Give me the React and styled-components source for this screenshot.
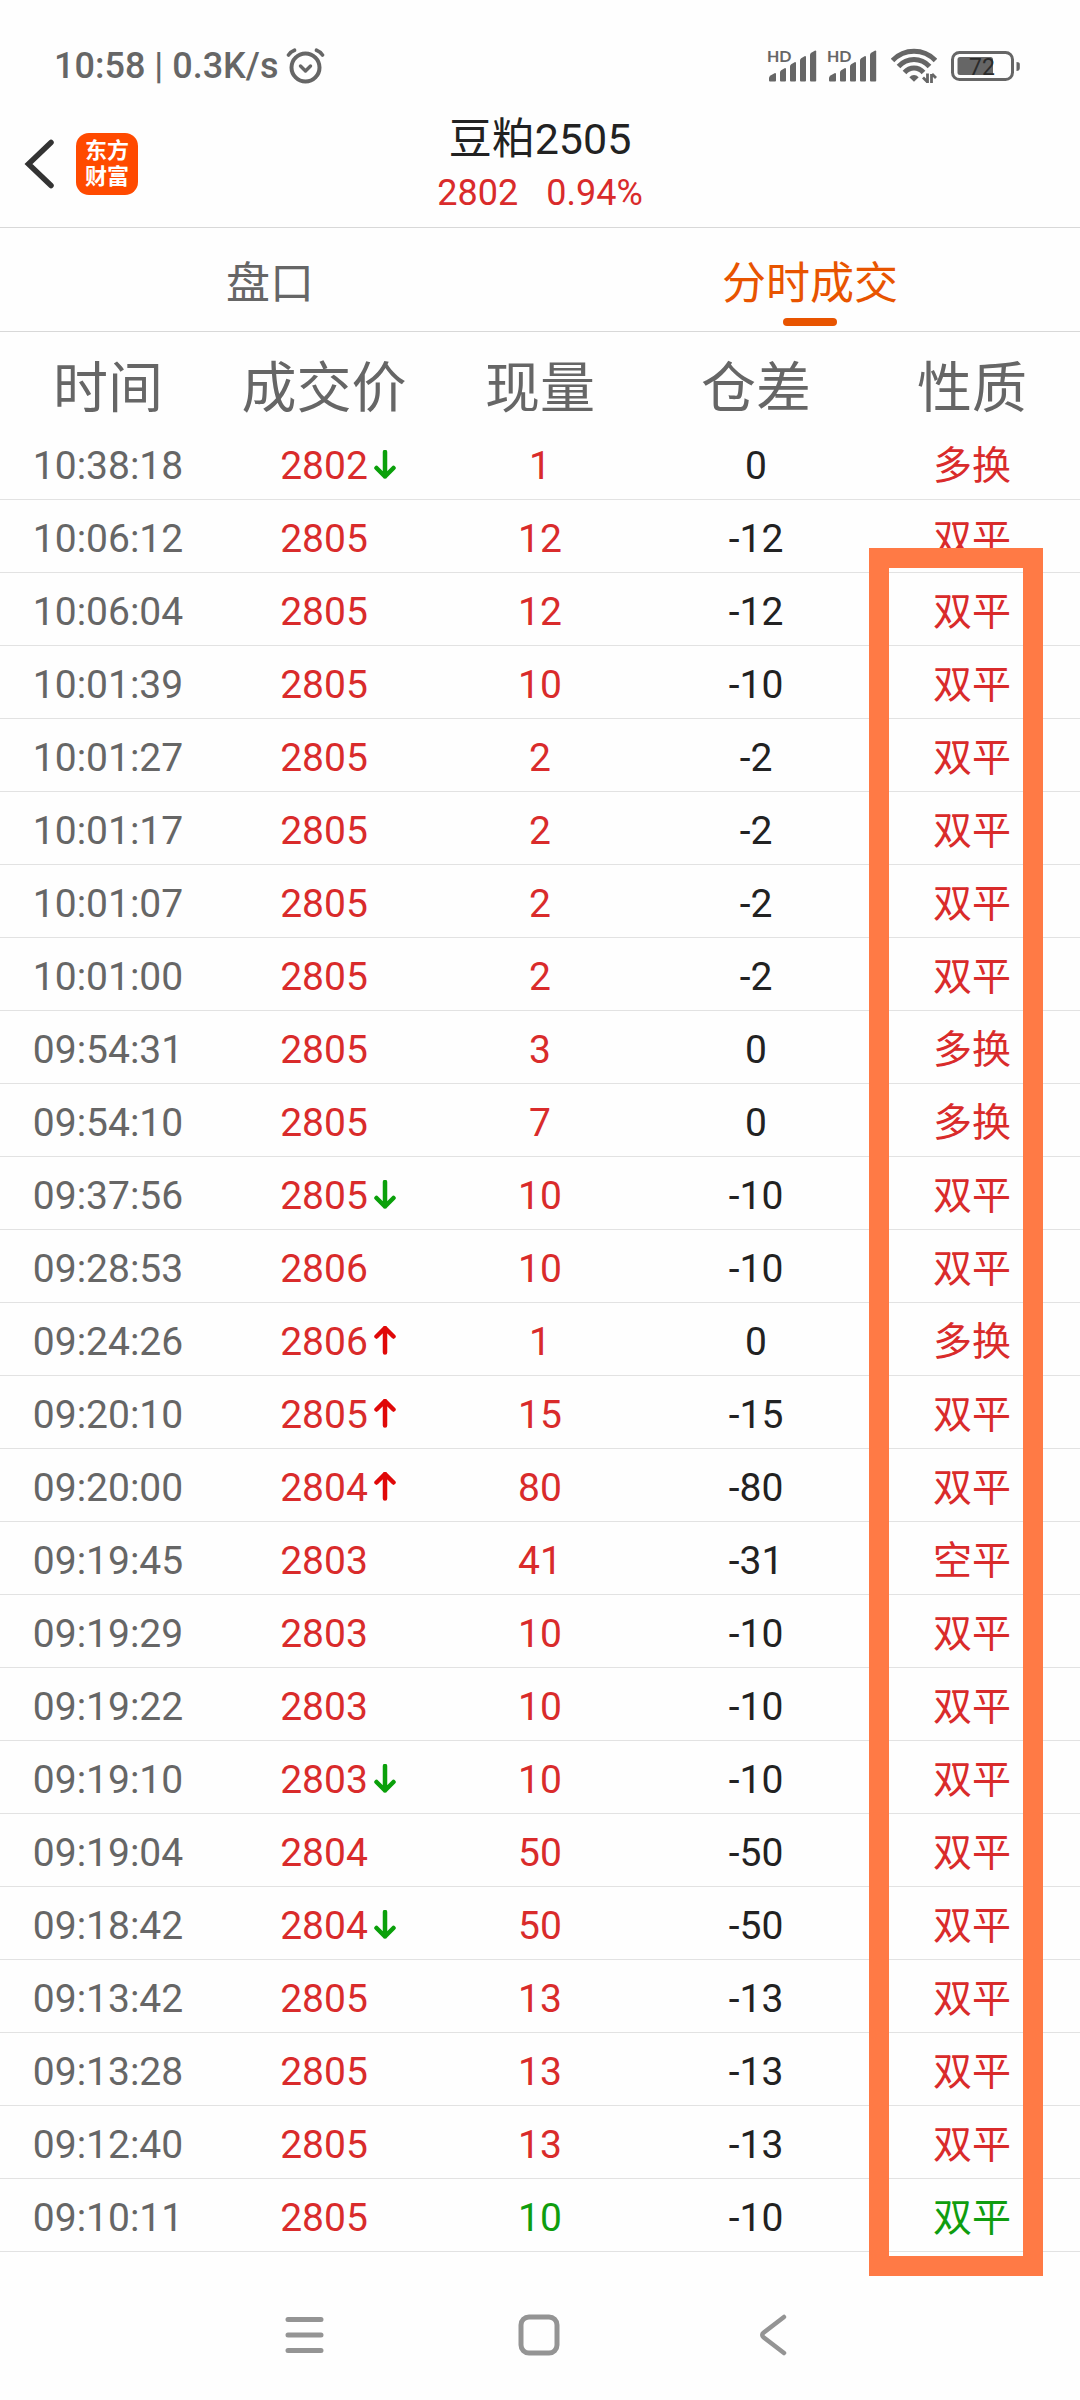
import React from "react";
import styled, { createGlobalStyle } from "styled-components";

const GlobalStyle = createGlobalStyle`
  *, *::before, *::after { box-sizing: border-box; }
  body {
    margin: 0;
    background: #fefefe;
    color: #222222;
    font-family: Roboto, "Noto Sans CJK SC", sans-serif;
  }
  button { border: 0; padding: 0; background: none; font: inherit; color: inherit; cursor: pointer; }
`;

const colors = {
  up: "#d92b2b",
  down: "#0f9d0f",
  muted: "#666666",
  ink: "#222222",
  accent: "#e85400",
  mark: "#ff7a45",
};

const Screen = styled.div`
  display: flex;
  flex-direction: column;
`;

const StatusBar = styled.div`
  display: flex;
  justify-content: space-between;
  align-items: center;
  height: 100px;
  padding: 32px 60px 0 54px;
  color: ${colors.muted};
`;

const StatusGroup = styled.div`
  display: flex;
  align-items: center;
  gap: ${(p) => p.$gap}px;
`;

const StatusText = styled.span`
  font-size: 36px;
  line-height: 44px;
  font-weight: 500;
`;

const Header = styled.header`
  display: grid;
  grid-template-columns: 1fr auto 1fr;
  height: 128px;
  padding: 0 24px;
  border-bottom: 1px solid #d8d8d8;
`;

const HeaderLeft = styled.div`
  display: flex;
  align-items: center;
  gap: 20px;
`;

const BackButton = styled.button`
  display: flex;
`;

const Logo = styled.div`
  display: flex;
  flex-direction: column;
  align-items: center;
  justify-content: center;
  width: 62px;
  height: 62px;
  border-radius: 13px;
  background: #ff4a00;
  color: #ffffff;
  font-size: 22px;
  font-weight: 700;
  line-height: 26px;
`;

const TitleBlock = styled.div`
  display: flex;
  flex-direction: column;
  align-items: center;
  padding-top: 13px;
`;

const Title = styled.h1`
  margin: 0;
  font-size: 43px;
  font-weight: 400;
  line-height: 52px;
`;

const Quote = styled.div`
  display: flex;
  gap: 28px;
  color: ${colors.up};
  font-size: 36px;
  line-height: 56px;
`;

const Tabs = styled.nav`
  display: grid;
  grid-template-columns: 1fr 1fr;
  height: 104px;
  border-bottom: 1px solid #d8d8d8;
`;

const Tab = styled.button`
  display: flex;
  flex-direction: column;
  align-items: center;
  justify-content: flex-end;
  gap: 4px;
  padding-bottom: 5px;
  font-size: 44px;
  line-height: 60px;
  color: ${(p) => (p.$active ? colors.accent : colors.muted)};

  &::after {
    content: "";
    width: 54px;
    height: 8px;
    border-radius: 4px;
    background: ${(p) => (p.$active ? colors.accent : "transparent")};
  }
`;

const Trades = styled.main`
  position: relative;
`;

const Table = styled.table`
  width: 100%;
  table-layout: fixed;
  border-collapse: separate;
  border-spacing: 0;
`;

const HeadCell = styled.th`
  height: 95px;
  padding: 16px 0 0;
  font-size: 55px;
  font-weight: 400;
  line-height: 72px;
  color: ${colors.muted};
`;

const Cell = styled.td`
  height: 73px;
  padding: 5px 0 0;
  border-bottom: 1px solid #e2e2e2;
  font-size: 39px;
  line-height: 48px;
  text-align: center;
  color: ${(p) => colors[p.$tone]};
`;

const Price = styled.div`
  display: grid;
  grid-template-columns: 1fr auto 1fr;
  align-items: center;
  gap: 5px;

  & > :first-child { grid-column: 2; }
`;

const Highlight = styled.div`
  position: absolute;
  top: 216px;
  bottom: -24px;
  left: calc(80% + 5px);
  right: 37px;
  border: 20px solid ${colors.mark};
  pointer-events: none;
`;

const NavBar = styled.nav`
  display: grid;
  grid-template-columns: repeat(3, 1fr);
  height: 148px;
  padding: 18px 190px 0 188px;
`;

const NavButton = styled.button`
  display: flex;
  align-items: center;
  justify-content: center;
`;

const AlarmIcon = () => (
  <svg width="40" height="36" viewBox="0 0 40 36" fill="none" stroke="currentColor" strokeWidth="4" strokeLinecap="round" strokeLinejoin="round">
    <circle cx="19.5" cy="19.5" r="14" />
    <path d="M14.5 18l5 5 5-5" strokeWidth="3.4" />
    <path d="M2.500 7Q5 3.500 8.500 2.200M36.500 7Q34 3.500 30.500 2.200" strokeWidth="3.6" />
  </svg>
);

const SignalSvg = styled.svg`
  overflow: visible;
`;

const SignalIcon = () => (
  <SignalSvg width="50" height="34" viewBox="0 0 50 34" fill="currentColor">
    <text x="0" y="13" fontSize="16" fontWeight="700" fontFamily="Lato, sans-serif">HD</text>
    <path d="M2 29q0-1.500 1.500-2.500l4.500-2.500q1 0 1 1v6.500q0 1-1 1H3q-1 0-1-1z" />
    <path d="M13 23.500q0-1.500 1.200-2.200l3.800-2.300q1 0 1 1v11.500q0 1-1 1h-4q-1 0-1-1z" />
    <path d="M23 17.500q0-1.500 1.200-2.200l3.800-2.300q1 0 1 1v17.500q0 1-1 1h-4q-1 0-1-1z" />
    <path d="M33 11.500q0-1.500 1.200-2.200l3.800-2.300q1 0 1 1v23.500q0 1-1 1h-4q-1 0-1-1z" />
    <path d="M43 6q0-1.500 1.200-2.200l4-2.300q1 0 1 1v29q0 1-1 1h-4.200q-1 0-1-1z" />
  </SignalSvg>
);

const WifiIcon = () => (
  <svg width="46" height="36" viewBox="0 0 46 36" fill="none" stroke="currentColor" strokeWidth="5">
    <path d="M1.500 12.500Q10.500 3.300 23 3.300T44.500 12.500" />
    <path d="M7.500 18.500Q14 11.600 23 11.600T38.500 18.500" />
    <path d="M13.500 24.500Q17.500 20 23 20T32.500 24.500" />
    <path d="M18.300 29.200Q20.500 27 23 27t4.700 2.200L23 33.800z" fill="currentColor" stroke="none" />
    <path d="M36.500 25.500v9.500M32 29.500l4 4M40.500 35v-9M45 30l-4-4" strokeWidth="2.800" />
  </svg>
);

const BatteryIcon = () => (
  <svg width="69" height="32" viewBox="0 0 69 32">
    <rect x="1.500" y="2.500" width="60" height="27" rx="7" fill="none" stroke="currentColor" strokeWidth="3" />
    <rect x="6.500" y="7" width="35.500" height="18" rx="2.500" fill="currentColor" />
    <path d="M65.500 12q3.300 0 3.300 2v4q0 3-3.300 3z" fill="currentColor" />
    <text x="18" y="24.500" fontSize="23" fill="#2b2b2b" fontFamily="Roboto, sans-serif">72</text>
  </svg>
);

const ArrowIcon = ({ dir }) => (
  <svg width="24" height="32" viewBox="0 0 24 32" fill="none" stroke={dir === "down" ? "#0aa00a" : "#e00808"} strokeWidth="4.500" strokeLinecap="round" strokeLinejoin="round">
    {dir === "down" ? <path d="M12 2v24.500M3.500 18l8.500 8.500 8.500-8.500" /> : <path d="M12 26.500V2M3.500 10.500L12 2l8.500 8.500" />}
  </svg>
);

const rows = [
  ["10:38:18", "2802", "down", "1", "0", "多换"],
  ["10:06:12", "2805", "", "12", "-12", "双平"],
  ["10:06:04", "2805", "", "12", "-12", "双平"],
  ["10:01:39", "2805", "", "10", "-10", "双平"],
  ["10:01:27", "2805", "", "2", "-2", "双平"],
  ["10:01:17", "2805", "", "2", "-2", "双平"],
  ["10:01:07", "2805", "", "2", "-2", "双平"],
  ["10:01:00", "2805", "", "2", "-2", "双平"],
  ["09:54:31", "2805", "", "3", "0", "多换"],
  ["09:54:10", "2805", "", "7", "0", "多换"],
  ["09:37:56", "2805", "down", "10", "-10", "双平"],
  ["09:28:53", "2806", "", "10", "-10", "双平"],
  ["09:24:26", "2806", "up", "1", "0", "多换"],
  ["09:20:10", "2805", "up", "15", "-15", "双平"],
  ["09:20:00", "2804", "up", "80", "-80", "双平"],
  ["09:19:45", "2803", "", "41", "-31", "空平"],
  ["09:19:29", "2803", "", "10", "-10", "双平"],
  ["09:19:22", "2803", "", "10", "-10", "双平"],
  ["09:19:10", "2803", "down", "10", "-10", "双平"],
  ["09:19:04", "2804", "", "50", "-50", "双平"],
  ["09:18:42", "2804", "down", "50", "-50", "双平"],
  ["09:13:42", "2805", "", "13", "-13", "双平"],
  ["09:13:28", "2805", "", "13", "-13", "双平"],
  ["09:12:40", "2805", "", "13", "-13", "双平"],
  ["09:10:11", "2805", "", "10", "-10", "双平", "down"],
];

export default function App() {
  return (
    <Screen>
      <GlobalStyle />
      <StatusBar>
        <StatusGroup $gap={8}>
          <StatusText>10:58 | 0.3K/s</StatusText>
          <AlarmIcon />
        </StatusGroup>
        <StatusGroup $gap={14}>
          <StatusGroup $gap={10}>
            <SignalIcon />
            <SignalIcon />
          </StatusGroup>
          <WifiIcon />
          <BatteryIcon />
        </StatusGroup>
      </StatusBar>

      <Header>
        <HeaderLeft>
          <BackButton aria-label="返回">
            <svg width="32" height="52" viewBox="0 0 32 52" fill="none" stroke="#333333" strokeWidth="5.500" strokeLinecap="round">
              <path d="M27 4.500L4.500 26 27 47.500" strokeLinejoin="miter" />
            </svg>
          </BackButton>
          <Logo>
            <span>东方</span>
            <span>财富</span>
          </Logo>
        </HeaderLeft>
        <TitleBlock>
          <Title>豆粕2505</Title>
          <Quote>
            <span>2802</span>
            <span>0.94%</span>
          </Quote>
        </TitleBlock>
      </Header>

      <Tabs>
        <Tab>盘口</Tab>
        <Tab $active aria-current="page">分时成交</Tab>
      </Tabs>

      <Trades>
        <Table>
          <thead>
            <tr>
              {["时间", "成交价", "现量", "仓差", "性质"].map((name) => (
                <HeadCell key={name} scope="col">{name}</HeadCell>
              ))}
            </tr>
          </thead>
          <tbody>
            {rows.map(([time, price, dir, volume, change, kind, tone = "up"]) => (
              <tr key={time}>
                <Cell $tone="muted">{time}</Cell>
                <Cell $tone="up">
                  <Price>
                    <span>{price}</span>
                    {dir && <ArrowIcon dir={dir} />}
                  </Price>
                </Cell>
                <Cell $tone={tone}>{volume}</Cell>
                <Cell $tone="ink">{change}</Cell>
                <Cell $tone={tone}>{kind}</Cell>
              </tr>
            ))}
          </tbody>
        </Table>
        <Highlight />
      </Trades>

      <NavBar>
        <NavButton aria-label="菜单">
          <svg width="40" height="42" viewBox="0 0 40 42" stroke="#949494" strokeWidth="5" strokeLinecap="round">
            <path d="M3 5.500h33M3 21h33M3 36.500h33" />
          </svg>
        </NavButton>
        <NavButton aria-label="主页">
          <svg width="42" height="42" viewBox="0 0 42 42" fill="none" stroke="#949494" strokeWidth="5">
            <rect x="3" y="3" width="36" height="36" rx="8" />
          </svg>
        </NavButton>
        <NavButton aria-label="后退">
          <svg width="28" height="42" viewBox="0 0 28 42" fill="none" stroke="#949494" strokeWidth="4.500" strokeLinecap="round">
            <path d="M25 3L4.500 18.800Q2 21 4.500 23.200L25 39" />
          </svg>
        </NavButton>
      </NavBar>
    </Screen>
  );
}
